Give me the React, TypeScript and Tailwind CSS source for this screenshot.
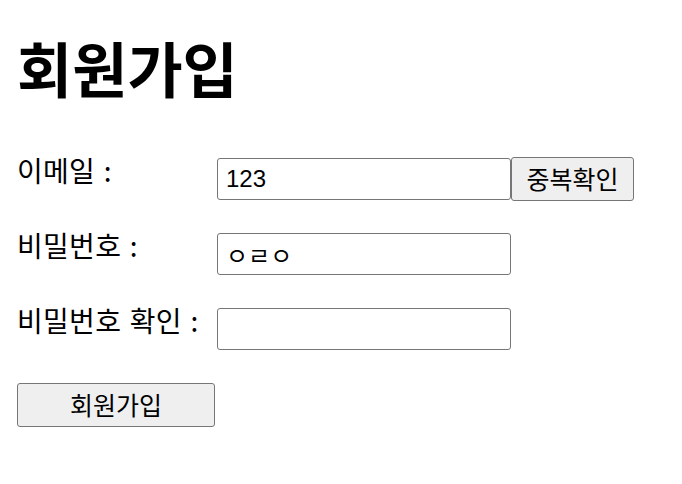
const labelCls =
  "w-[200px] shrink-0 text-[28px] text-black pb-[18px] tracking-[0.3px] [word-spacing:2px]";
const inputCls =
  "w-[294px] h-[42px] border-[1.5px] border-[#767676] rounded-[3px] px-[8px] text-[24px] bg-white outline-none";
const btnCls =
  "h-[44px] border-[1.5px] border-[#767676] rounded-[3px] bg-[#efefef] text-[25px] text-black";

export default function App() {
  return (
    <div
      className="px-[17px] pt-[31px] bg-white min-h-[484px]"
      style={{ fontFamily: '"Noto Sans CJK KR", "Noto Sans", sans-serif' }}
    >
      <h1 className="text-[60px] font-bold leading-[1.2] mb-[54px]">회원가입</h1>
      <div className="flex flex-col gap-[31px]">
        <div className="flex items-center h-[44px]">
          <label className={labelCls}>이메일 :</label>
          <input
            className={inputCls}
            defaultValue="123"
            style={{ fontFamily: '"Liberation Sans", Arial, sans-serif' }}
          />
          <button className={btnCls + " w-[123px]"}>중복확인</button>
        </div>
        <div className="flex items-center h-[44px]">
          <label className={labelCls}>비밀번호 :</label>
          <input className={inputCls} defaultValue="ㅇㄹㅇ" />
        </div>
        <div className="flex items-center h-[44px]">
          <label className={labelCls}>비밀번호 확인 :</label>
          <input className={inputCls} />
        </div>
        <div>
          <button className={btnCls + " w-[198px] mt-[1px]"}>회원가입</button>
        </div>
      </div>
    </div>
  );
}
